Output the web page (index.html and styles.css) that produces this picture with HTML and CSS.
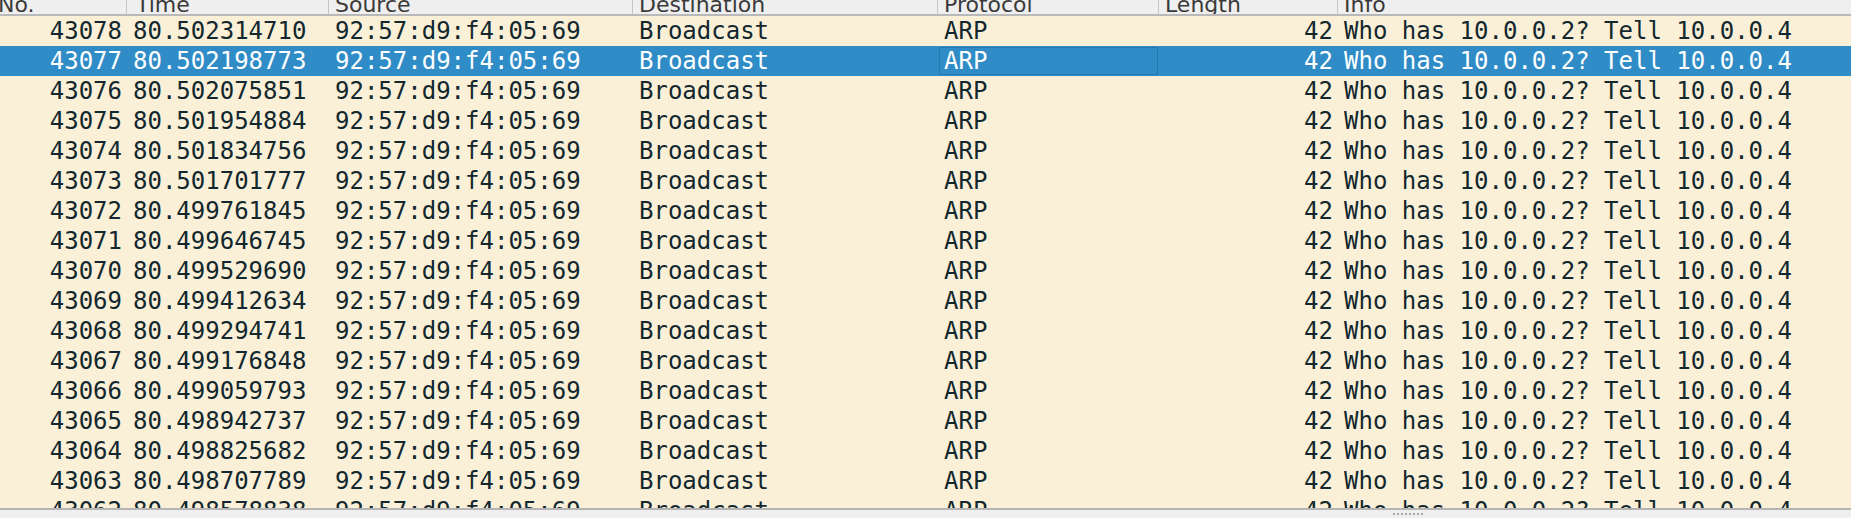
FILE: index.html
```html
<!DOCTYPE html>
<html>
<head>
<meta charset="utf-8">
<link rel="stylesheet" href="styles.css">
</head>
<body>
<div class="pane">
  <div class="list">
    <div class="hdr">
      <div class="hc c-no first">No.</div>
      <div class="hc c-time">Time</div>
      <div class="hc c-src">Source</div>
      <div class="hc c-dst">Destination</div>
      <div class="hc c-proto">Protocol</div>
      <div class="hc c-len">Length</div>
      <div class="hc c-info">Info</div>
    </div>
    <div class="rows" id="rows"></div>
  </div>
  <div class="splitter"><div class="grip"></div></div>
</div>
<script src="app.js"></script>
</body>
</html>
```
FILE: styles.css
```css
html, body {
  margin: 0;
  padding: 0;
  background: #efefef;
}
.pane {
  width: 1851px;
  height: 518px;
  display: flex;
  flex-direction: column;
  overflow: hidden;
}
.list {
  height: 508px;
  flex: none;
  overflow: hidden;
  background: #faf0d7;
  display: flex;
  flex-direction: column;
}
.hdr {
  display: grid;
  grid-template-columns: 127px 202px 304px 305px 221px 179px 1fr;
  height: 14px;
  background: #efefef;
  border-bottom: 2px solid #b9b9b9;
  flex: none;
}
.hc {
  font-family: "DejaVu Sans", sans-serif;
  font-size: 22px;
  line-height: 10px;
  height: 14px;
  overflow: hidden;
  color: #3a3a3a;
  padding-left: 6px;
  border-right: 1px solid #c7c7c7;
  white-space: nowrap;
}
.hc.first {
  padding-left: 0;
  text-indent: -2px;
}
.hc.c-time { padding-left: 9px; }
.hc.c-info { border-right: none; }
.row {
  display: grid;
  grid-template-columns: 127px 202px 304px 305px 221px 179px 1fr;
  height: 30px;
  font-family: "DejaVu Sans Mono", monospace;
  font-size: 24px;
  line-height: 30px;
  color: #12272e;
  background: #faf0d7;
}
.row .cell {
  padding: 0 6px;
  white-space: nowrap;
  overflow: hidden;
}
.row .r { text-align: right; padding-right: 5px; }
.row.sel {
  background: #308cc6;
  color: #ffffff;
}
.row.sel .focus {
  outline: 1px solid #2a79ae;
  outline-offset: -2px;
}
.splitter {
  flex: none;
  height: 8px;
  border-top: 2px solid #b4b4b4;
  background: #efefef;
  display: flex;
  align-items: center;
}
.grip {
  margin-left: 1393px;
  width: 30px;
  height: 2px;
  background: radial-gradient(circle at 1px 1px, #a8a8a8 0.9px, transparent 1.1px);
  background-size: 4px 2px;
}
```
FILE: app.js
```js
var times = [
  "80.502314710","80.502198773","80.502075851","80.501954884","80.501834756",
  "80.501701777","80.499761845","80.499646745","80.499529690","80.499412634",
  "80.499294741","80.499176848","80.499059793","80.498942737","80.498825682",
  "80.498707789","80.498578838"
];
var html = "";
for (var i = 0; i < times.length; i++) {
  var no = 43078 - i;
  var sel = (no === 43077) ? " sel" : "";
  html += '<div class="row' + sel + '">' +
    '<div class="cell r">' + no + '</div>' +
    '<div class="cell">' + times[i] + '</div>' +
    '<div class="cell">92:57:d9:f4:05:69</div>' +
    '<div class="cell">Broadcast</div>' +
    '<div class="cell focus">ARP</div>' +
    '<div class="cell r">42</div>' +
    '<div class="cell">Who has 10.0.0.2? Tell 10.0.0.4</div>' +
    '</div>';
}
document.getElementById("rows").innerHTML = html;
```
